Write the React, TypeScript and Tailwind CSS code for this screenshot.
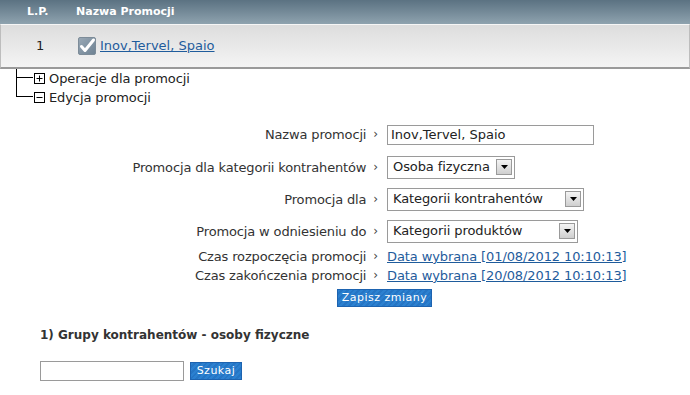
import React from "react";

const font = { fontFamily: '"DejaVu Sans", Verdana, sans-serif' };

function CheckIcon() {
  return (
    <svg width="18" height="18" viewBox="0 0 18 18">
      <defs>
        <linearGradient id="cb" x1="0" y1="0" x2="1" y2="1">
          <stop offset="0" stopColor="#9aa9b6" />
          <stop offset="1" stopColor="#6e8293" />
        </linearGradient>
      </defs>
      <rect x="0.5" y="0.5" width="17" height="17" rx="1.5" fill="url(#cb)" stroke="#7d8c99" />
      <path d="M3.5 9.5 L7 13.5 L15.5 3" fill="none" stroke="#fff" strokeWidth="3" strokeLinecap="round" strokeLinejoin="round" />
    </svg>
  );
}

function BoxIcon({ plus }: { plus?: boolean }) {
  return (
    <svg width="11" height="11" viewBox="0 0 11 11" className="shrink-0">
      <rect x="0.5" y="0.5" width="10" height="10" fill="#fff" stroke="#000" />
      <path d="M2.5 5.5 H8.5" stroke="#000" />
      {plus && <path d="M5.5 2.5 V8.5" stroke="#000" />}
    </svg>
  );
}

function Arrow() {
  return (
    <span className="flex h-[16px] w-[16px] items-center justify-center border border-[#9a9a9a] bg-gradient-to-b from-[#f4f4f4] to-[#cfcfcf]">
      <svg width="7" height="4" viewBox="0 0 7 4">
        <path d="M0 0 H7 L3.5 4 Z" fill="#000" />
      </svg>
    </span>
  );
}

function Select({ text, w }: { text: string; w: string }) {
  return (
    <div className={`flex h-[23px] items-center justify-between border border-[#9a9a9a] bg-white pl-[5px] pr-[2px] text-[13px] tracking-[-0.1px] text-[#222] ${w}`}>
      <span>{text}</span>
      <Arrow />
    </div>
  );
}

const Label = ({ children }: { children: React.ReactNode }) => (
  <div className="flex items-center justify-end gap-[7px] text-[13px] leading-[19px] tracking-[-0.15px] text-[#333]">
    <span>{children}</span>
    <span className="text-[12px] text-[#444]">›</span>
  </div>
);

const btn =
  "flex items-center justify-center border border-[#1d63b0] text-white text-[11px] tracking-[0.5px] bg-[repeating-linear-gradient(135deg,#2b80d0_0px,#2b80d0_2px,#2575c4_2px,#2575c4_4px)]";

export default function App() {
  return (
    <div className="h-[395px] w-[690px] overflow-hidden bg-white" style={font}>
      {/* header */}
      <div className="flex h-[24px] items-center bg-gradient-to-b from-[#5b7282] to-[#8fa3af] text-[11px] font-bold text-white">
        <div className="w-[76px] pl-[27px]">L.P.</div>
        <div>Nazwa Promocji</div>
      </div>
      {/* row */}
      <div className="flex h-[45px] items-center border-x border-b-2 border-t border-x-[#bdbdbd] border-b-[#9a9a9a] border-t-[#f6f6f6] bg-gradient-to-b from-[#dddddd] to-[#f4f4f4] text-[13px]">
        <div className="w-[77px] pl-[35px] text-[#222]">1</div>
        <CheckIcon />
        <a className="ml-[4px] text-[#1f5c9c] underline">Inov,Tervel, Spaio</a>
      </div>
      {/* tree */}
      <div className="pl-[16px] text-[13px] tracking-[-0.1px] text-[#222]">
        <div className="flex h-[19px] items-stretch">
          <div className="flex w-[17px] flex-col">
            <div className="h-[9px] border-b border-l border-black" />
            <div className="flex-1 border-l border-black" />
          </div>
          <div className="flex items-center gap-[4px] pl-[1px]">
            <BoxIcon plus />
            <span>Operacje dla promocji</span>
          </div>
        </div>
        <div className="flex h-[19px] items-stretch">
          <div className="flex w-[17px] flex-col">
            <div className="h-[9px] border-b border-l border-black" />
          </div>
          <div className="flex items-center gap-[4px] pl-[1px]">
            <BoxIcon />
            <span>Edycja promocji</span>
          </div>
        </div>
      </div>
      {/* form */}
      <div className="mt-[11px] grid grid-cols-[378px_1fr] items-center gap-x-[9px]">
        <Label>Nazwa promocji</Label>
        <div className="flex h-[33px] items-center">
          <div className="flex h-[20px] w-[207px] items-center border border-[#9a9a9a] bg-white pl-[3px] text-[13px] text-[#222]">
            Inov,Tervel, Spaio
          </div>
        </div>
        <Label>Promocja dla kategorii kontrahentów</Label>
        <div className="flex h-[32px] items-center">
          <Select text="Osoba fizyczna" w="w-[128px]" />
        </div>
        <Label>Promocja dla</Label>
        <div className="flex h-[32px] items-center">
          <Select text="Kategorii kontrahentów" w="w-[197px]" />
        </div>
        <Label>Promocja w odniesieniu do</Label>
        <div className="flex h-[32px] items-center">
          <Select text="Kategorii produktów" w="w-[191px]" />
        </div>
        <Label>Czas rozpoczęcia promocji</Label>
        <div className="flex h-[19px] items-center text-[13px] tracking-[-0.1px]">
          <a className="text-[#1f5c9c] underline">Data wybrana [01/08/2012 10:10:13]</a>
        </div>
        <Label>Czas zakończenia promocji</Label>
        <div className="flex h-[19px] items-center text-[13px] tracking-[-0.1px]">
          <a className="text-[#1f5c9c] underline">Data wybrana [20/08/2012 10:10:13]</a>
        </div>
      </div>
      <div className="mt-[4px] flex pl-[337px]">
        <div className={`${btn} h-[18px] w-[95px]`}>Zapisz zmiany</div>
      </div>
      <div className="mt-[19px] pl-[40px] text-[12px] font-bold text-[#333]">
        1) Grupy kontrahentów - osoby fizyczne
      </div>
      <div className="mt-[17px] flex items-center gap-[6px] pl-[40px]">
        <div className="h-[20px] w-[144px] border border-[#9a9a9a] bg-white" />
        <div className={`${btn} h-[18px] w-[52px]`}>Szukaj</div>
      </div>
    </div>
  );
}
